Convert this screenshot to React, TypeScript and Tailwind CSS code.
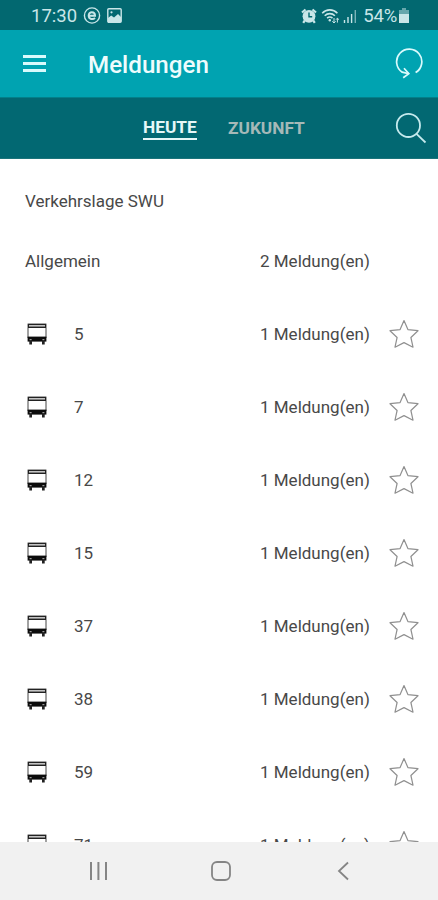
import React from 'react';

interface LineMessage {
  line: string;
  count: number;
}

const LINES: LineMessage[] = [
  { line: '5', count: 1 },
  { line: '7', count: 1 },
  { line: '12', count: 1 },
  { line: '15', count: 1 },
  { line: '37', count: 1 },
  { line: '38', count: 1 },
  { line: '59', count: 1 },
  { line: '71', count: 1 },
];

const BusIcon = () => (
  <svg viewBox="0 0 20 22" className="h-[22px] w-5 shrink-0">
    <path d="M0.6 0.6H19.4V5H0.6Z" fill="#222" />
    <path d="M2 2H18V3.6H2Z" fill="#c4c4c4" />
    <path d="M1 5V15M19 5V15" stroke="#444" strokeWidth="1" />
    <path d="M0.6 13.6H19.4V18.6H0.6Z" fill="#0c0c0c" />
    <path d="M2.6 16H4.6V17.2H2.6ZM15.4 16H17.4V17.2H15.4Z" fill="#999" />
    <path d="M2.3 18H5V21.4H2.3ZM15 18H17.7V21.4H15Z" fill="#222" />
  </svg>
);

const StarIcon = () => (
  <svg viewBox="0 0 30 30" className="h-[30px] w-[30px] shrink-0" fill="none" stroke="#909090" strokeWidth="1.2" strokeLinejoin="round">
    <path d="M15 1.5L18.9 10.6L29 11.7L21.9 18.5L24 28.2L15 23.6L6 28.2L8.1 18.5L1 11.7L11.1 10.6Z" />
  </svg>
);

const StatusBar = () => (
  <div className="flex h-[30px] shrink-0 items-center bg-[#026870] pt-0.5 pr-[29px] pl-[31px] text-[#c9e6e8]">
    <span className="text-[18.5px] leading-none">17:30</span>
    <svg viewBox="0 0 18 18" className="ml-[6px] h-[18px] w-[18px]" fill="none" stroke="currentColor">
      <circle cx="9" cy="8.5" r="7.6" strokeWidth="1.4" />
      <path d="M6 8.7H12C12 4.1 5.7 4.2 5.7 8.5C5.7 12.5 10.2 12.9 11.9 10.9" strokeWidth="2" />
    </svg>
    <svg viewBox="0 0 15 15" className="mb-[2px] ml-[6px] h-[15px] w-[15px]">
      <rect x="0.8" y="0.8" width="13.4" height="13.4" rx="1" fill="none" stroke="currentColor" strokeWidth="1.4" />
      <path d="M1 10L4.2 7.5L7 9.5L11 6L14 9V14H1Z" fill="currentColor" />
      <circle cx="4.5" cy="4.3" r="1.1" fill="currentColor" />
    </svg>
    <div className="ml-auto flex items-center">
      {/* alarm clock */}
      <svg viewBox="0 0 16 16" className="mb-px h-4 w-4" fill="none" stroke="currentColor">
        <circle cx="8" cy="8.3" r="6.4" fill="currentColor" stroke="none" />
        <path d="M1 4.5L4.5 1.5M15 4.5L11.5 1.5M3.8 12.5L2.2 14.8M12.2 12.5L13.8 14.8" strokeWidth="2.2" />
        <path d="M8 4.6V8.7H11.2" stroke="#026870" strokeWidth="1.4" />
      </svg>
      <svg viewBox="0 0 20 16" className="mr-0.5 mb-px ml-[4px] h-4 w-5" fill="none" stroke="currentColor" strokeWidth="1.6">
        <path d="M1.2 5.2C5.4 0.7 12.2 0.7 16.4 5.2M3.7 7.8C6.6 4.9 11 4.9 13.9 7.8M6.1 10.2C7.8 8.7 9.8 8.7 11.5 10.2" />
        <circle cx="8.8" cy="12.3" r="1.2" fill="currentColor" stroke="none" />
        <path d="M13 10V15M11.3 13.3L13 15L14.6 13.3M16.4 14.6V10.3M15 11.7L16.4 10.2L18 11.7" strokeWidth="1" />
      </svg>
      <svg viewBox="0 0 14 15" className="h-[15px] w-[14px]" stroke="currentColor" strokeWidth="1.4">
        <path d="M1.5 11V14M5 8V14M8.6 5V14" />
        <path d="M12.3 1V14" opacity="0.6" />
      </svg>
      <span className="ml-[6px] text-[18.5px] leading-none tracking-[-0.2px]">54%</span>
      <svg viewBox="0 0 10 15" className="mb-px ml-[2px] h-[15px] w-[10px]" fill="currentColor">
        <path d="M3 0H7V2H10V15H0V2H3Z" opacity="0.5" />
        <path d="M0 6H10V15H0Z" />
      </svg>
    </div>
  </div>
);

const Header = () => (
  <header className="flex h-[67px] shrink-0 items-center bg-[#00a3b1] pr-[15px] pl-[23px]">
    <div className="flex w-[23px] flex-col gap-[4px]">
      <span className="h-[3px] bg-[#d9fafc]" />
      <span className="h-[3px] bg-[#d9fafc]" />
      <span className="h-[3px] bg-[#d9fafc]" />
    </div>
    <h1 className="ml-[42px] pt-[3px] text-[24.2px] leading-none font-medium text-[#eefcfd]">Meldungen</h1>
    <svg viewBox="0 0 28 32" className="mb-px ml-auto h-8 w-7" fill="none" stroke="#d9fafc" strokeWidth="1.7">
      <path d="M20.6 25.6A12.6 12.6 0 1 0 7.2 25.2L13.6 26.6" />
      <path d="M9 21.3L13.8 26.6L8.2 30.8" />
    </svg>
  </header>
);

const Tabs = () => (
  <nav className="flex h-[62px] shrink-0 items-center border-t border-b border-t-[#02808a] border-b-[#1b747b] bg-[#026872] pr-[11px] pl-[143px] text-[17.3px] leading-none font-bold">
    <span className="mt-[3px] w-[54px] border-b-2 border-[#e6f7f8] pb-px whitespace-nowrap text-[#e6f7f8]">HEUTE</span>
    <span className="mt-px ml-[31px] text-[#a5b9b8]">ZUKUNFT</span>
    <svg viewBox="0 0 32 32" className="ml-auto h-8 w-8" fill="none" stroke="#c5eaed" strokeWidth="1.8">
      <circle cx="13.4" cy="13.4" r="11.6" />
      <path d="M21.5 21.8L30.5 30.5" />
    </svg>
  </nav>
);

const MessageRow: React.FC<LineMessage> = ({ line, count }) => (
  <li className="flex h-[73px] items-center pr-[19px] pl-[27px]">
    <BusIcon />
    <span className="ml-[27px] pt-[2px]">{line}</span>
    <span className="ml-auto w-[111px] pt-[2px] whitespace-nowrap">{count} Meldung(en)</span>
    <span className="ml-[18px]">
      <StarIcon />
    </span>
  </li>
);

const SystemNav = () => (
  <footer className="flex h-[58px] shrink-0 items-center bg-[#f1f1f1] pl-[89px] text-[#858585]">
    <svg viewBox="0 0 20 20" className="h-5 w-5" stroke="currentColor" strokeWidth="2">
      <path d="M2 1V19M9.4 1V19M17 1V19" />
    </svg>
    <svg viewBox="0 0 22 22" className="ml-[101px] h-[22px] w-[22px]" fill="none" stroke="currentColor" strokeWidth="1.8">
      <rect x="2" y="2" width="18" height="18" rx="5" />
    </svg>
    <svg viewBox="0 0 12 20" className="ml-[105px] h-5 w-3" fill="none" stroke="currentColor" strokeWidth="1.8">
      <path d="M11 1.5L2 10L11 18.5" />
    </svg>
  </footer>
);

export default function App() {
  return (
    <div className="flex h-[900px] w-[438px] flex-col overflow-hidden bg-white font-[Roboto,sans-serif]">
      <StatusBar />
      <Header />
      <Tabs />
      <main className="min-h-0 flex-1 overflow-hidden pt-3 text-[17px] leading-none text-[#484848]">
        <div className="flex h-[60px] items-center pl-[25px]">Verkehrslage SWU</div>
        <div className="flex h-[66px] items-center pb-[6px] pl-[25px]">
          <span>Allgemein</span>
          <span className="mr-[67px] ml-auto w-[111px] whitespace-nowrap">2 Meldung(en)</span>
        </div>
        <ul>
          {LINES.map((item) => (
            <MessageRow key={item.line} {...item} />
          ))}
        </ul>
      </main>
      <SystemNav />
    </div>
  );
}
